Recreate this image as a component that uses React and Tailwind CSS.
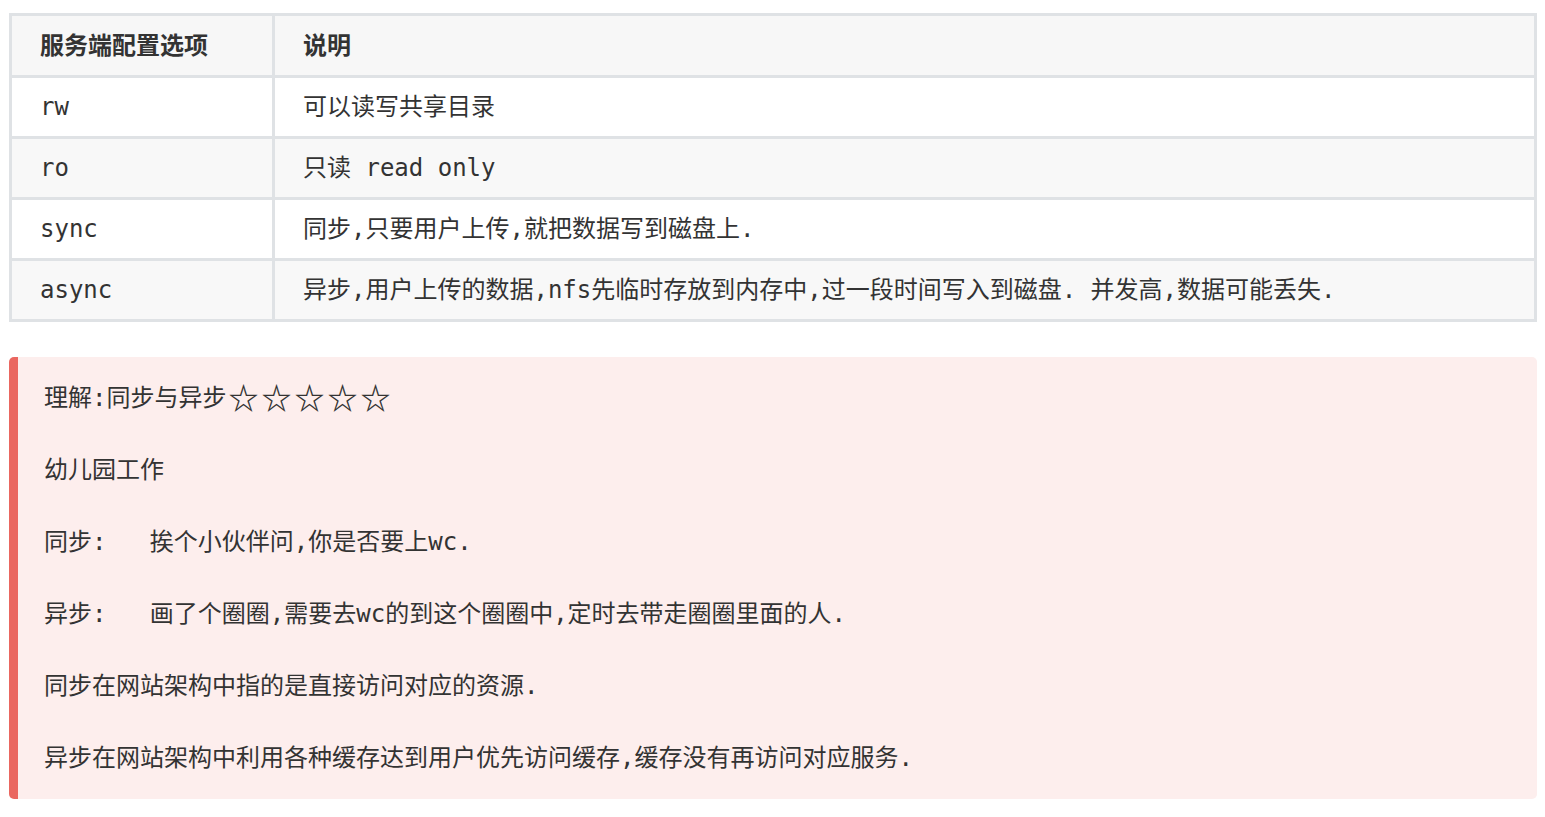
export default function App() {
  const font = { fontFamily: '"DejaVu Sans Mono", "Noto Sans CJK SC", monospace' };
  const rows = [
    ["rw", "可以读写共享目录", "bg-white"],
    ["ro", "只读 read only", "bg-[#f8f8f8]"],
    ["sync", "同步,只要用户上传,就把数据写到磁盘上.", "bg-white"],
    ["async", "异步,用户上传的数据,nfs先临时存放到内存中,过一段时间写入到磁盘. 并发高,数据可能丢失.", "bg-[#f8f8f8]"],
  ];
  const notes = [
    "幼儿园工作",
    "同步:   挨个小伙伴问,你是否要上wc.",
    "异步:   画了个圈圈,需要去wc的到这个圈圈中,定时去带走圈圈里面的人.",
    "同步在网站架构中指的是直接访问对应的资源.",
    "异步在网站架构中利用各种缓存达到用户优先访问缓存,缓存没有再访问对应服务.",
  ];
  return (
    <div className="min-h-screen bg-white text-[24px] text-[#333]" style={font}>
      <div className="pt-[13px] pl-[9px]">
        <div className="w-[1528px] border-[3px] border-[#dfe2e5]">
          <div className="flex h-[59px] items-center bg-[#f7f7f7] font-bold">
            <div className="flex h-full w-[263px] items-center border-r-[3px] border-[#dfe2e5] px-[28px]">服务端配置选项</div>
            <div className="px-[28px]">说明</div>
          </div>
          {rows.map(([a, b, bg]) => (
            <div key={a} className={`flex h-[61px] items-stretch border-t-[3px] border-[#dfe2e5] ${bg}`}>
              <div className="flex w-[263px] items-center border-r-[3px] border-[#dfe2e5] px-[28px]">{a}</div>
              <div className="flex items-center whitespace-pre px-[28px]">{b}</div>
            </div>
          ))}
        </div>
        <div className="mt-[35px] w-[1528px] rounded-[5px] border-l-[9px] border-[#ea6760] bg-[#fdeeed] py-[23px] pl-[26px]">
          <div className="flex flex-col gap-[36px] leading-[36px]">
            <p className="flex h-[36px] items-center whitespace-pre">
              <span>理解:同步与异步</span>
              <span className="ml-[2px] -translate-y-[2px] text-[30px] font-bold leading-none tracking-[3px]" style={{ fontFamily: '"Noto Sans CJK SC", sans-serif' }}>☆☆☆☆☆</span>
            </p>
            {notes.map((n) => (
              <p key={n} className="whitespace-pre">{n}</p>
            ))}
          </div>
        </div>
      </div>
    </div>
  );
}
